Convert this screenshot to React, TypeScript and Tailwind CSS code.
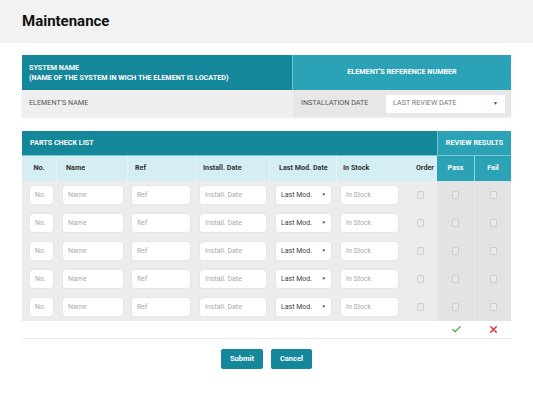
import { Check, X } from "lucide-react";

const cols = [
  { key: "no", label: "No.", w: "w-[35px]", head: "justify-center", ml: "ml-[8px]", iw: "w-[23px]" },
  { key: "name", label: "Name", w: "w-[71px]", head: "pl-[9px]", ml: "ml-[6px]", iw: "w-[60px]" },
  { key: "ref", label: "Ref", w: "w-[68px]", head: "pl-[7px]", ml: "ml-[4px]", iw: "w-[58px]" },
  { key: "install", label: "Install. Date", w: "w-[74px]", head: "pl-[7px]", ml: "ml-[4px]", iw: "w-[66px]" },
];

function Box() {
  return <div className="w-[7px] h-[8px] rounded-[1px] border border-[#cfcfcf] bg-[#e9e9e9]" />;
}

function Field({ text, w }: { text: string; w: string }) {
  return (
    <div className={`${w} h-[18px] bg-white rounded-[2px] shadow-[0_0_1px_rgba(0,0,0,0.25)] flex items-center px-[5px] text-[7px] text-[#aaaaaa] whitespace-nowrap overflow-hidden`}>
      {text}
    </div>
  );
}

export default function App() {
  const rows = [0, 1, 2, 3, 4];
  return (
    <div className="w-[533px] h-[400px] bg-white font-['Roboto',sans-serif] text-[#333]">
      <div className="h-[43px] bg-[#f2f2f2] flex items-center pl-[22px]">
        <h1 className="text-[15px] font-bold text-[#111]">Maintenance</h1>
      </div>

      <div className="mx-[22px] mt-[12px] shadow-[0_1px_2px_rgba(0,0,0,0.08)]">
        <div className="flex h-[35px]">
          <div className="w-[271px] bg-[#15879a] flex flex-col justify-center pl-[7px] text-white font-bold text-[7.2px] leading-[10px] border-r border-[#6cc3d1]">
            <span>SYSTEM NAME</span>
            <span>(NAME OF THE SYSTEM IN WICH THE ELEMENT IS LOCATED)</span>
          </div>
          <div className="flex-1 bg-[#2ba2b5] flex items-center justify-center text-white font-bold text-[7.2px]">
            ELEMENT'S REFERENCE NUMBER
          </div>
        </div>
        <div className="flex h-[27px]">
          <div className="w-[271px] bg-[#efefef] flex items-center pl-[7px] text-[7.2px] text-[#555]">
            ELEMENT'S NAME
          </div>
          <div className="flex-1 bg-[#e7e7e7] flex items-center pl-[8px] text-[7.2px] text-[#555]">
            <span className="w-[85px]">INSTALLATION DATE</span>
            <div className="w-[119px] h-[18px] bg-white flex items-center justify-between px-[7px] text-[#777]">
              <span>LAST REVIEW DATE</span>
              <span className="text-[5px] text-[#444]">▼</span>
            </div>
          </div>
        </div>
      </div>

      <div className="mx-[22px] mt-[14px]">
        <div className="flex h-[24px]">
          <div className="w-[415px] bg-[#15879a] flex items-center pl-[8px] text-white font-bold text-[7.2px]">
            PARTS CHECK LIST
          </div>
          <div className="flex-1 bg-[#2ba2b5] border-l border-[#6cc3d1] flex items-center justify-center text-white font-bold text-[7.2px]">
            REVIEW RESULTS
          </div>
        </div>
        <div className="flex h-[26px] text-[7.2px] font-bold text-[#333] border-t border-[#7cc9d6]">
          {cols.map((c) => (
            <div key={c.key} className={`${c.w} bg-[#d5eef3] flex items-center ${c.head} border-r border-[#e4f5f8]`}>
              {c.label}
            </div>
          ))}
          <div className="w-[67px] bg-[#d5eef3] flex items-center pl-[9px] border-r border-[#e4f5f8]">Last Mod. Date</div>
          <div className="w-[66px] bg-[#d5eef3] flex items-center pl-[6px]">In Stock</div>
          <div className="w-[34px] bg-[#d5eef3] flex items-center justify-end pr-[3px]">Order</div>
          <div className="w-[38px] bg-[#2ba2b5] text-white flex items-center justify-center border-r border-[#8fd4df]">Pass</div>
          <div className="w-[36px] bg-[#2ba2b5] text-white flex items-center justify-center">Fail</div>
        </div>
        {rows.map((r) => (
          <div key={r} className="flex h-[28px]">
            {cols.map((c) => (
              <div key={c.key} className={`${c.w} bg-[#ececec] flex items-center`}>
                <div className={c.ml}>
                  <Field text={c.label} w={c.iw} />
                </div>
              </div>
            ))}
            <div className="w-[67px] bg-[#ececec] flex items-center pl-[6px]">
              <div className="w-[55px] h-[18px] bg-white rounded-[2px] shadow-[0_0_1px_rgba(0,0,0,0.25)] flex items-center justify-between px-[5px] text-[7px] text-[#444]">
                <span>Last Mod.</span>
                <span className="text-[4.5px]">▼</span>
              </div>
            </div>
            <div className="w-[66px] bg-[#ececec] flex items-center pl-[4px]">
              <Field text="In Stock" w="w-[57px]" />
            </div>
            <div className="w-[34px] bg-[#ececec] flex items-center justify-center">
              <Box />
            </div>
            <div className="w-[38px] bg-[#e3e3e3] flex items-center justify-center border-r border-[#eaeaea]">
              <Box />
            </div>
            <div className="w-[36px] bg-[#e3e3e3] flex items-center justify-center">
              <Box />
            </div>
          </div>
        ))}
        <div className="flex h-[18px] border-b border-[#e8e8e8]">
          <div className="w-[415px]" />
          <div className="w-[38px] flex items-center justify-center">
            <Check size={11} strokeWidth={3.5} className="text-[#5cb85c]" />
          </div>
          <div className="w-[36px] flex items-center justify-center">
            <X size={11} strokeWidth={3.5} className="text-[#e53a3f]" />
          </div>
        </div>
      </div>

      <div className="flex justify-center gap-[8px] mt-[10px]">
        <button className="w-[42px] h-[20px] rounded-[2px] bg-[#15879a] text-white text-[7.5px] font-bold">Submit</button>
        <button className="w-[41px] h-[20px] rounded-[2px] bg-[#15879a] text-white text-[7.5px] font-bold">Cancel</button>
      </div>
    </div>
  );
}
